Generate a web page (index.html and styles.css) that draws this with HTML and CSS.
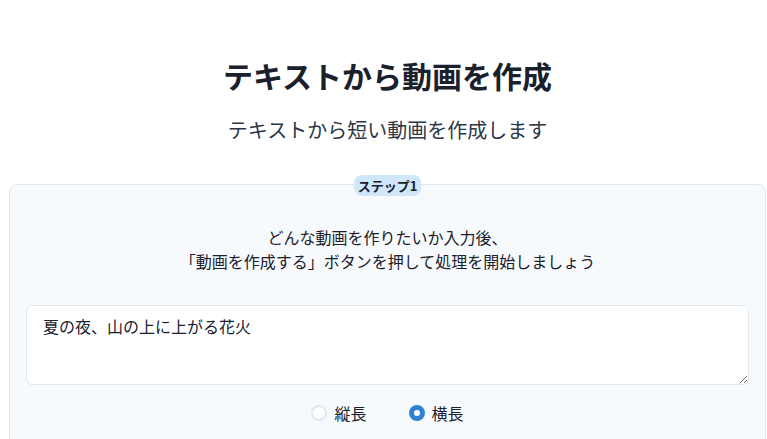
FILE: index.html
```html
<!DOCTYPE html>
<html lang="ja">
<head>
<meta charset="utf-8">
<link rel="stylesheet" href="styles.css">
</head>
<body>
<main class="page">
  <h1 class="title">テキストから動画を作成</h1>
  <p class="subtitle">テキストから短い動画を作成します</p>
  <section class="card">
    <span class="badge">ステップ1</span>
    <p class="desc">どんな動画を作りたいか入力後、<br>「動画を作成する」ボタンを押して処理を開始しましょう</p>
    <textarea class="prompt">夏の夜、山の上に上がる花火</textarea>
    <div class="radios">
      <label class="radio"><span class="dot"></span><span>縦長</span></label>
      <label class="radio"><span class="dot checked"></span><span>横長</span></label>
    </div>
  </section>
</main>
</body>
</html>
```
FILE: styles.css
```css
* { box-sizing: border-box; }
html, body { margin: 0; padding: 0; background: #ffffff; }
body {
  font-family: "Noto Sans CJK JP", "Noto Sans", sans-serif;
  color: #1a202c;
}
.page {
  padding: 55px 1px 0 9px;
  display: flex;
  flex-direction: column;
  align-items: stretch;
}
.title {
  margin: 0;
  font-size: 30px;
  line-height: 40px;
  font-weight: 700;
  text-align: center;
}
.subtitle {
  margin: 20px 0 0;
  font-size: 20px;
  line-height: 30px;
  text-align: center;
  color: #2d3748;
}
.card {
  position: relative;
  margin-top: 39px;
  background: #f7fafc;
  border: 1px solid #e2e8f0;
  border-radius: 8px;
  padding: 40px 16px 40px;
  display: flex;
  flex-direction: column;
}
.badge {
  position: absolute;
  top: -10px;
  left: 50%;
  transform: translateX(-50%);
  background: #cfe6fb;
  border-radius: 8px;
  padding: 0 4px;
  font-size: 13px;
  line-height: 21px;
  font-weight: 700;
  color: #1a202c;
  white-space: nowrap;
}
.desc {
  margin: 0;
  text-align: center;
  font-size: 16px;
  line-height: 24px;
  color: #1a202c;
}
.prompt {
  margin-top: 32px;
  height: 80px;
  width: 100%;
  border: 1px solid #e2e8f0;
  border-radius: 6px;
  background: #ffffff;
  padding: 8px 16px;
  font-family: inherit;
  font-size: 16px;
  line-height: 24px;
  color: #1a202c;
  resize: vertical;
}
.radios {
  margin-top: 16px;
  display: flex;
  justify-content: center;
  gap: 42px;
}
.radio {
  display: flex;
  align-items: center;
  gap: 7px;
  font-size: 16px;
  line-height: 24px;
}
.dot {
  width: 16px;
  height: 16px;
  border-radius: 50%;
  border: 2px solid #e2e8f0;
  background: #ffffff;
  position: relative;
}
.dot.checked {
  border-color: #3182ce;
  background: #3182ce;
}
.dot.checked::after {
  content: "";
  position: absolute;
  left: 50%;
  top: 50%;
  width: 6px;
  height: 6px;
  border-radius: 50%;
  background: #ffffff;
  transform: translate(-50%, -50%);
}
```
